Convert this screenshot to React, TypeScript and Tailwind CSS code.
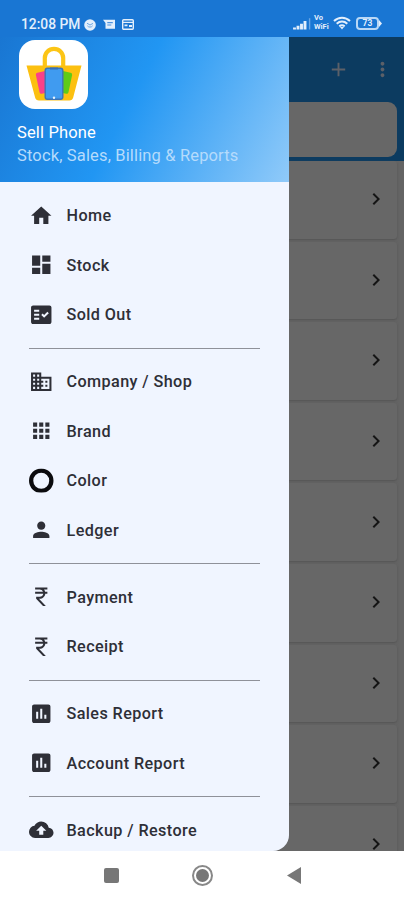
import {
  MdAdd, MdApps, MdAssessment, MdBackup, MdBusiness, MdChevronRight, MdCurrencyRupee,
  MdDashboard, MdFactCheck, MdHome, MdMoreVert, MdPerson,
} from "react-icons/md";

function RingIcon() {
  return (
    <svg viewBox="0 0 24 24" fill="none" stroke="#0b0b0e" strokeWidth="4.2">
      <circle cx="12" cy="12" r="9.9" />
    </svg>
  );
}

const sections = [
  [
    { label: "Home", Icon: MdHome },
    { label: "Stock", Icon: MdDashboard },
    { label: "Sold Out", Icon: MdFactCheck },
  ],
  [
    { label: "Company / Shop", Icon: MdBusiness },
    { label: "Brand", Icon: MdApps },
    { label: "Color", Icon: RingIcon },
    { label: "Ledger", Icon: MdPerson },
  ],
  [
    { label: "Payment", Icon: MdCurrencyRupee },
    { label: "Receipt", Icon: MdCurrencyRupee },
  ],
  [
    { label: "Sales Report", Icon: MdAssessment },
    { label: "Account Report", Icon: MdAssessment },
  ],
  [{ label: "Backup / Restore", Icon: MdBackup }],
];

const cards = [1, 2, 3, 4, 5, 6, 7, 8, 9];

function StatusBar() {
  return (
    <div className="flex h-[37px] shrink-0 items-end justify-between bg-[#1976d3] pr-[22px] pb-[5px] pl-[21px] text-[#e3effc]">
      <div className="flex items-center">
        <span className="w-[61px] text-[13.8px] leading-[15px] font-medium whitespace-nowrap">12:08 PM</span>
        <svg className="ml-[2px] h-3 w-3" viewBox="0 0 12 12">
          <circle cx="6" cy="6" r="5.8" fill="#e3effc" />
          <path d="M3 4.2 6 6l3-1.6M3.4 6.8c1 1.700 4.200 1.700 5.200 0" fill="none" stroke="#6ba6e4" strokeWidth="1" />
        </svg>
        <svg className="ml-[7px] h-[11px] w-3" viewBox="0 0 12 11">
          <path d="M0 .8h12v9H2.5V4z" fill="#e3effc" />
          <path d="M4.3 3.6h5.5M4.3 6h4" stroke="#4b91dd" strokeWidth="1.1" />
        </svg>
        <svg className="ml-[7px] h-[11px] w-3" viewBox="0 0 12 11">
          <rect x=".7" y=".7" width="10.6" height="9.6" rx="1" fill="none" stroke="#e3effc" strokeWidth="1.4" />
          <path d="M1 3.4h10" stroke="#e3effc" strokeWidth="1.2" />
          <path d="M2.5 6.3h3M7 7h3" stroke="#e3effc" strokeWidth="1.8" />
        </svg>
      </div>
      <div className="flex items-center">
        <svg className="h-[13px] w-[18px]" viewBox="0 0 18 13">
          <path d="M1.5 12.5v-2M5 12.5V8.8M8.5 12.5V6.8M12 12.5V4" stroke="#e3effc" strokeWidth="2.9" />
          <path d="M16.6 12.5V1.2" stroke="#69a6e4" strokeWidth="1.4" />
        </svg>
        <div className="ml-[3px] flex w-4 flex-col text-[7.5px] leading-[8.8px] font-bold">
          <span>Vo</span>
          <span>WiFi</span>
        </div>
        <svg className="ml-[3px] h-[14px] w-[18px]" viewBox="0 0 18 14" fill="none" stroke="#e3effc" strokeWidth="2.1">
          <path d="M1 4.9c4.7-4.3 11.3-4.3 16 0M3.7 7.7c3.2-2.8 7.4-2.8 10.6 0M6.3 10.3c1.7-1.3 3.7-1.3 5.4 0" />
          <path d="m7 11 2 2.4 2-2.4z" fill="#e3effc" stroke="none" />
        </svg>
        <div className="ml-[5px] flex items-center">
          <div className="flex h-[13px] w-[23px] items-center justify-center rounded-[4px] border-2 border-[#b9d8f6] text-[8.5px] leading-none font-bold">
            73
          </div>
          <svg className="h-[7px] w-[3px]" viewBox="0 0 3 7">
            <path d="M0 0 3 3.5 0 7z" fill="#e3effc" />
          </svg>
        </div>
      </div>
    </div>
  );
}

function AppLogo() {
  return (
    <div className="h-[69px] w-[69px] rounded-[16px] bg-white">
      <svg viewBox="0 0 69 69" className="h-full w-full">
        <path d="M25.8 28V18a9.2 9.2 0 0 1 18.4 0v10" fill="none" stroke="#fcc516" strokeWidth="4.2" />
        <path d="M7.5 25.5h55l-8.3 32a4 4 0 0 1-3.9 3H20a4 4 0 0 1-3.9-3z" fill="#fcc010" />
        <rect x="18.5" y="31.5" width="13" height="21.5" rx="2" fill="#fa4189" transform="rotate(-12 25 42)" />
        <rect x="38.5" y="31.5" width="13" height="21.5" rx="2" fill="#5fcb16" transform="rotate(12 45 42)" />
        <rect x="26.2" y="28.2" width="17.6" height="31" rx="2.2" fill="#409bf0" stroke="#3f74b4" strokeWidth="1.4" />
        <path d="M31 28.5h8" stroke="#386fb5" strokeWidth="1.8" />
        <circle cx="35" cy="57.7" r="1.2" fill="#e6f3ff" />
      </svg>
    </div>
  );
}

function Drawer() {
  return (
    <aside className="absolute inset-y-0 left-0 flex w-[289px] flex-col overflow-hidden rounded-br-[16px] bg-[#f0f5ff]">
      <header className="h-[145px] shrink-0 bg-[linear-gradient(117deg,#1976d2_0%,#2196f3_45%,#90caf9_100%)] pt-[3px]">
        <div className="pl-[19px]">
          <AppLogo />
        </div>
        <div className="pt-[12px] pl-[17px]">
          <p className="text-[16.5px] leading-[23px] tracking-[0.15px] text-white">Sell Phone</p>
          <p className="text-[16.5px] leading-[23px] tracking-[0.15px] text-[#b5dbfc]">Stock, Sales, Billing &amp; Reports</p>
        </div>
      </header>
      <nav className="flex flex-col pt-[9px]">
        {sections.map((items, i) => (
          <div key={i} className="flex flex-col">
            {i > 0 && (
              <div className="flex h-[17.5px] items-center px-[29px]">
                <div className="h-px w-full bg-[#8f9199]" />
              </div>
            )}
            {items.map(({ label, Icon }) => (
              <a key={label} className="flex h-[49.5px] shrink-0 items-center pl-[29px] text-[#2e2f37]">
                <span className="h-[24.5px] w-[24.5px] shrink-0 -translate-y-[0.5px] [&>svg]:h-full [&>svg]:w-full">
                  <Icon />
                </span>
                <span className="pt-px pl-[13px] text-[16.2px] leading-6 font-medium tracking-[0.4px]">{label}</span>
              </a>
            ))}
          </div>
        ))}
      </nav>
    </aside>
  );
}

export default function App() {
  return (
    <div className="flex h-[900px] w-[404px] flex-col overflow-hidden bg-white font-[Roboto,sans-serif]">
      <StatusBar />
      <div className="relative flex h-[814px] shrink-0 flex-col overflow-hidden bg-[#646464]">
        <div className="h-[124px] shrink-0 bg-[#0c3b60]">
          <div className="flex h-[65px] items-center justify-end gap-[21px] pr-[10px] text-[#5c6068]">
            <MdAdd className="h-[23px] w-[23px]" />
            <MdMoreVert className="h-[23px] w-[23px]" />
          </div>
          <div className="mr-[7px] ml-2 h-[55px] rounded-[9px] bg-[#676767]" />
        </div>
        <div className="flex flex-col pr-[7px]">
          {cards.map((card) => (
            <div key={card} className="h-[80.6px] shrink-0 pb-[3px]">
              <div className="flex h-full items-center justify-end rounded-[3px] bg-[#676767] pr-[9px] pb-px text-[#151515] shadow-[0_1px_2px_0px_#545454]">
                <MdChevronRight className="h-6 w-6" />
              </div>
            </div>
          ))}
        </div>
        <Drawer />
      </div>
      <div className="flex h-[49px] shrink-0 items-center bg-white pl-[104px]">
        <div className="h-[15px] w-[15px] rounded-[2px] bg-[#777]" />
        <div className="ml-[73px] flex h-[21px] w-[21px] items-center justify-center rounded-full border-2 border-[#888]">
          <div className="h-[13px] w-[13px] rounded-full bg-[#777]" />
        </div>
        <svg className="ml-[74px] h-[17px] w-[14px]" viewBox="0 0 14 17">
          <path d="M14 0v17L0 8.5z" fill="#777" />
        </svg>
      </div>
    </div>
  );
}
